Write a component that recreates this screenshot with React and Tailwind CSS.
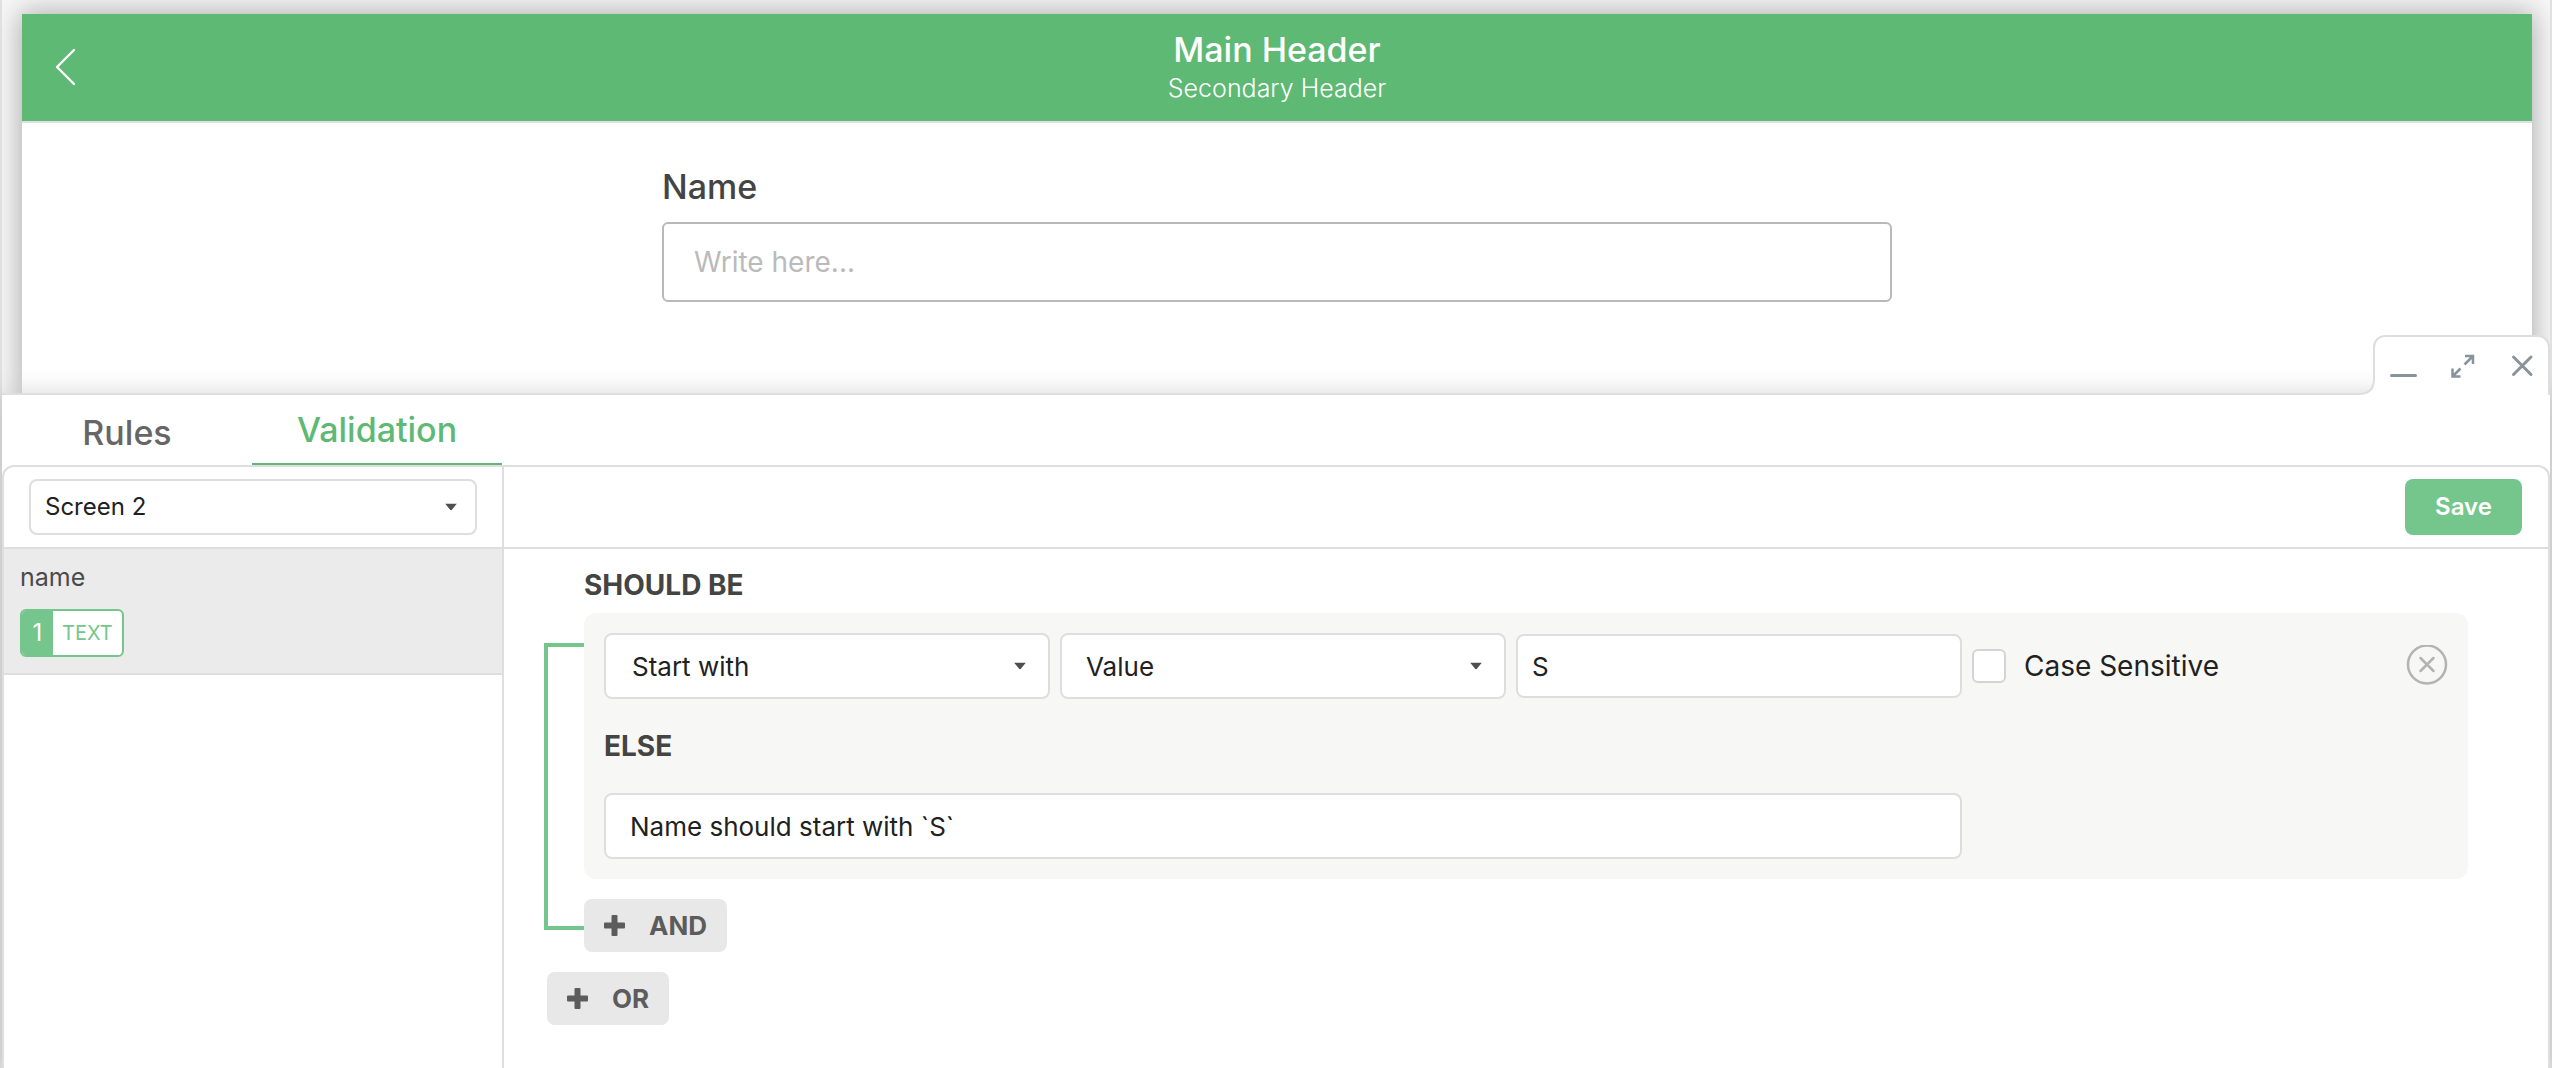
import React from "react";

function SelectBox({ label, value, options, className, caretClass }) {
  return (
    <div className="relative w-full">
      <select
        aria-label={label}
        defaultValue={value}
        className={
          "block w-full appearance-none rounded-lg border-2 border-[#dedede] bg-white text-[#212121] outline-none " +
          className
        }
      >
        {options.map((o) => (
          <option key={o}>{o}</option>
        ))}
      </select>
      <svg
        aria-hidden="true"
        viewBox="0 0 12 7"
        className={"pointer-events-none absolute top-1/2 h-[7px] w-3 -translate-y-1/2 " + caretClass}
      >
        <path d="M0 0h12L6.7 6.5q-.7.7-1.4 0z" fill="#4f4f4f" />
      </svg>
    </div>
  );
}

function PlusButton({ children, className }) {
  return (
    <button
      type="button"
      className={
        "flex h-[53px] w-fit items-center gap-6 rounded-lg bg-[#e8e8e8] px-5 text-[26px] font-bold text-[#5c5c5c] " +
        className
      }
    >
      <svg aria-hidden="true" viewBox="0 0 21 21" className="size-[21px]">
        <path
          d="M8.500 0h4q1 0 1 1v6.500H20q1 0 1 1v4q0 1-1 1h-6.500V20q0 1-1 1h-4q-1 0-1-1v-6.500H1q-1 0-1-1v-4q0-1 1-1h6.500V1q0-1 1-1z"
          fill="currentColor"
        />
      </svg>
      {children}
    </button>
  );
}

function Preview() {
  return (
    <section className="flex h-[393px] shrink-0 flex-col overflow-hidden bg-[#f7f7f7] pt-3.5 pr-[18px] pl-5">
      <div className="flex-1 bg-white shadow-[0_0_26px_2px_rgba(0,0,0,0.3)]">
        <header className="grid h-[109px] grid-cols-[1fr_auto_1fr] border-b-2 border-[#e0e0e0] bg-[#5eb974] text-white">
          <button type="button" aria-label="Back" className="ml-8 w-6 self-center">
            <svg viewBox="0 0 24 40" className="h-10 w-6" fill="none" stroke="currentColor" strokeWidth="2.4">
              <path d="M20 2 3 19l17 17" strokeLinecap="round" strokeLinejoin="round" />
            </svg>
          </button>
          <div className="pt-4 text-center">
            <h1 className="text-[34px] leading-10 font-medium">Main Header</h1>
            <p className="text-[25px] leading-9 font-light">Secondary Header</p>
          </div>
        </header>
        <div className="mx-auto w-[49%] pt-11">
          <label htmlFor="name" className="block text-[34px] leading-10 font-medium text-[#444444]">
            Name
          </label>
          <input
            id="name"
            placeholder="Write here..."
            className="mt-[15px] block h-20 w-full rounded-md border-2 border-[#b9b9b9] px-[30px] text-[28px] outline-none placeholder:text-[#bababa]"
          />
        </div>
      </div>
    </section>
  );
}

function WindowControls() {
  return (
    <div className="absolute right-0 bottom-full flex h-[60px] w-[177px] items-center rounded-t-xl border-2 border-b-0 border-[#dedede] bg-white text-[#87949b]">
      <svg aria-hidden="true" viewBox="0 0 16 16" className="absolute right-full bottom-0 size-4">
        <path d="M0 15Q15 15 15 0h1v16H0z" fill="#fff" />
        <path d="M0 15Q15 15 15 0" fill="none" stroke="#dedede" strokeWidth="2" />
      </svg>
      <button type="button" aria-label="Minimize" className="ml-[13px]">
        <svg viewBox="0 0 32 32" className="size-8" stroke="currentColor" strokeWidth="3" strokeLinecap="round">
          <path d="M3.500 25.500h24" />
        </svg>
      </button>
      <button type="button" aria-label="Expand" className="ml-[27px]">
        <svg viewBox="0 0 32 32" className="size-8" fill="none" stroke="currentColor" strokeWidth="2.5">
          <path d="M17.500 14.500 26 6M18 6h8v8M13.500 18.500 5.500 26.500M5.500 18.500v8h8" />
        </svg>
      </button>
      <button type="button" aria-label="Close" className="ml-[28px]">
        <svg viewBox="0 0 32 32" className="size-8" stroke="currentColor" strokeWidth="3" strokeLinecap="round">
          <path d="M6.500 7 24 24.500M24 7 6.500 24.500" />
        </svg>
      </button>
    </div>
  );
}

function Sidebar() {
  return (
    <aside className="w-[500px] shrink-0 border-r-2 border-[#dedede]">
      <div className="h-[82px] border-b-2 border-[#dedede] px-[25px] pt-3">
        <SelectBox
          label="Screen"
          value="Screen 2"
          options={["Screen 1", "Screen 2"]}
          className="h-14 pl-3.5 text-2xl"
          caretClass="right-5"
        />
      </div>
      <button
        type="button"
        className="flex h-[126px] w-full flex-col items-start border-b-2 border-[#dedede] bg-[#ebebeb] px-4 pt-3 text-left"
      >
        <span className="text-[25px] leading-8 text-[#4a4a4a]">name</span>
        <span className="mt-4 flex h-12 overflow-hidden rounded-md border-2 border-[#75c68c] bg-white">
          <span className="flex w-[31px] items-center justify-center bg-[#75c68c] text-2xl text-white">1</span>
          <span className="flex items-center px-[9px] text-xl text-[#75c68c]">TEXT</span>
        </span>
      </button>
    </aside>
  );
}

function Condition() {
  return (
    <div className="pt-[18px] pr-20 pl-10">
      <div className="pl-10">
        <h2 className="text-[28px] leading-9 font-bold text-[#444444]">SHOULD BE</h2>
        <div className="relative mt-2.5">
          <span
            aria-hidden="true"
            className="absolute top-[30px] -bottom-[51px] right-full w-10 border-4 border-r-0 border-[#75c68c]"
          />
          <div className="grid grid-cols-[446fr_446fr_446fr_476fr] items-center gap-x-2.5 rounded-xl bg-[#f7f7f6] p-5">
            <SelectBox
              label="Condition"
              value="Start with"
              options={["Start with", "End with"]}
              className="h-[66px] pl-[26px] text-[26px]"
              caretClass="right-6"
            />
            <SelectBox
              label="Compared with"
              value="Value"
              options={["Value", "Field"]}
              className="h-[66px] pl-6 text-[26px]"
              caretClass="right-6"
            />
            <input
              aria-label="Value"
              defaultValue="S"
              className="h-16 w-full rounded-lg border-2 border-[#dedede] bg-white px-3.5 text-[26px] text-[#212121] outline-none"
            />
            <div className="flex items-center justify-between">
              <label className="flex items-center gap-[18px] text-[28px] text-[#212121]">
                <input
                  type="checkbox"
                  className="size-[34px] appearance-none rounded-md border-2 border-[#d4d4d4] bg-white checked:bg-[#75c68c]"
                />
                Case Sensitive
              </label>
              <button type="button" aria-label="Remove condition" className="self-start text-[#b3b3b3]">
                <svg viewBox="0 0 42 42" className="size-[42px]" fill="none" stroke="currentColor" strokeWidth="2.5">
                  <circle cx="21" cy="19.500" r="19" />
                  <path d="m14.500 13 13 13M27.500 13l-13 13" strokeLinecap="round" />
                </svg>
              </button>
            </div>
            <label
              htmlFor="message"
              className="col-span-4 mt-[29px] mb-7 text-[28px] leading-[37px] font-bold text-[#444444]"
            >
              ELSE
            </label>
            <input
              id="message"
              defaultValue="Name should start with `S`"
              className="col-span-3 h-[66px] w-full rounded-lg border-2 border-[#dedede] bg-white px-6 text-[26px] text-[#212121] outline-none"
            />
          </div>
        </div>
        <PlusButton className="mt-5">AND</PlusButton>
      </div>
      <PlusButton className="mt-5 ml-[3px]">OR</PlusButton>
    </div>
  );
}

export default function App() {
  return (
    <div className="flex min-h-screen flex-col border-x-2 border-[#e0e0e0] bg-white font-['Inter',sans-serif]">
      <Preview />
      <section className="relative flex grow flex-col border-t-2 border-[#dedede] bg-white shadow-[0_0_24px_rgba(0,0,0,0.16)]">
        <WindowControls />
        <nav className="flex h-[70px] text-[34px] font-medium">
          <button type="button" className="w-[250px] pt-1 text-[#666666]">
            Rules
          </button>
          <button type="button" className="relative w-[250px] border-b-2 border-[#5eb974] text-[#5eb974]">
            Validation
          </button>
        </nav>
        <div className="flex grow rounded-t-xl border-2 border-b-0 border-[#dedede]">
          <Sidebar />
          <main className="min-w-0 grow">
            <div className="flex h-[82px] justify-end border-b-2 border-[#dedede] pt-3 pr-[26px]">
              <button type="button" className="h-14 w-[117px] rounded-lg bg-[#75c68c] text-2xl font-semibold text-white">
                Save
              </button>
            </div>
            <Condition />
          </main>
        </div>
      </section>
    </div>
  );
}
